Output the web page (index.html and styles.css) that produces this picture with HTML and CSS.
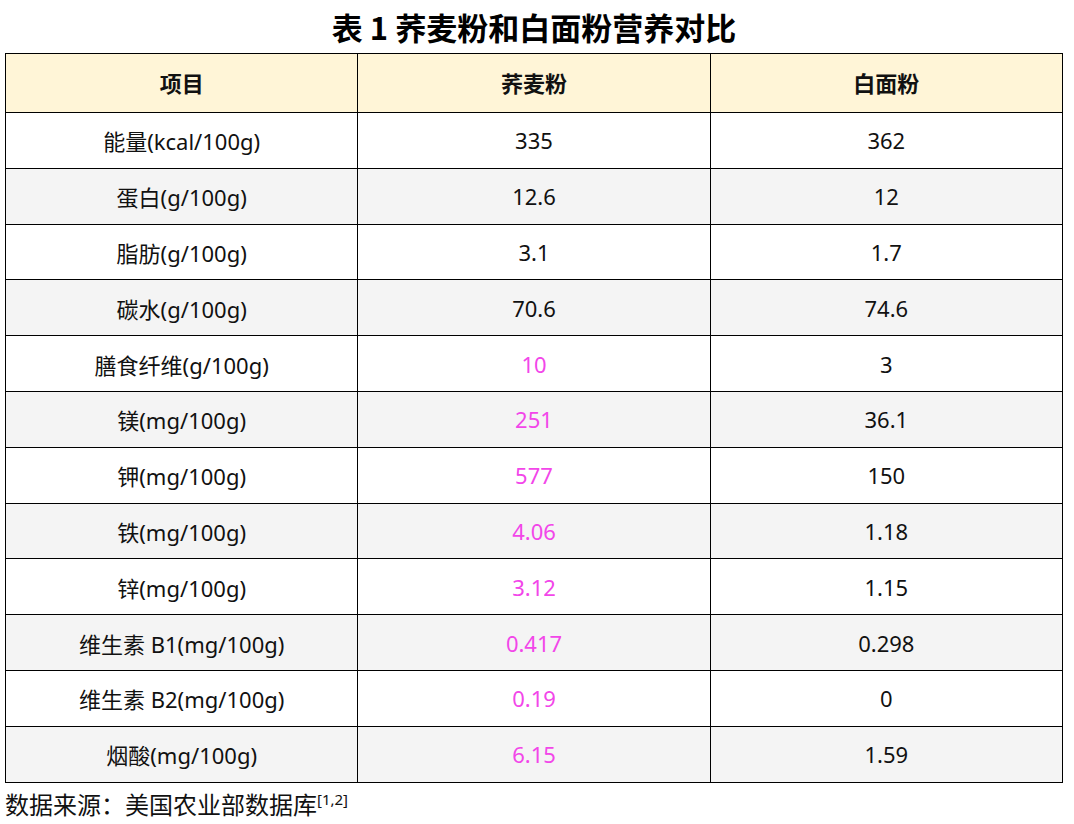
FILE: index.html
```html
<!DOCTYPE html>
<html lang="zh-CN">
<head>
<meta charset="utf-8">
<link rel="stylesheet" href="styles.css">
</head>
<body>
<div class="page">
  <h1 class="title">表 1 荞麦粉和白面粉营养对比</h1>
  <table class="cmp">
    <thead>
      <tr><th>项目</th><th>荞麦粉</th><th>白面粉</th></tr>
    </thead>
    <tbody>
      <tr><td>能量(kcal/100g)</td><td>335</td><td>362</td></tr>
      <tr><td>蛋白(g/100g)</td><td>12.6</td><td>12</td></tr>
      <tr><td>脂肪(g/100g)</td><td>3.1</td><td>1.7</td></tr>
      <tr><td>碳水(g/100g)</td><td>70.6</td><td>74.6</td></tr>
      <tr><td>膳食纤维(g/100g)</td><td class="hi">10</td><td>3</td></tr>
      <tr><td>镁(mg/100g)</td><td class="hi">251</td><td>36.1</td></tr>
      <tr><td>钾(mg/100g)</td><td class="hi">577</td><td>150</td></tr>
      <tr><td>铁(mg/100g)</td><td class="hi">4.06</td><td>1.18</td></tr>
      <tr><td>锌(mg/100g)</td><td class="hi">3.12</td><td>1.15</td></tr>
      <tr><td>维生素 B1(mg/100g)</td><td class="hi">0.417</td><td>0.298</td></tr>
      <tr><td>维生素 B2(mg/100g)</td><td class="hi">0.19</td><td>0</td></tr>
      <tr><td>烟酸(mg/100g)</td><td class="hi">6.15</td><td>1.59</td></tr>
    </tbody>
  </table>
  <p class="source">数据来源：美国农业部数据库<sup>[1,2]</sup></p>
</div>
</body>
</html>
```
FILE: styles.css
```css
html, body {
  margin: 0;
  padding: 0;
  background: #ffffff;
}
.page {
  padding: 0 11px 0 5px;
  font-family: "Noto Sans", "Noto Sans CJK SC", sans-serif;
  color: #111111;
}
.title {
  margin: 0;
  height: 53px;
  line-height: 54px;
  font-size: 31px;
  font-weight: 700;
  text-align: center;
  font-family: "Noto Sans CJK SC", sans-serif;
  color: #000000;
}
.cmp {
  width: 1058px;
  border-collapse: collapse;
  table-layout: fixed;
  font-size: 22px;
}
.cmp th, .cmp td {
  border: 1.5px solid #000000;
  text-align: center;
  padding: 0;
}
.cmp th {
  background: #fff5d7;
  height: 55px;
  padding-bottom: 3px;
  font-weight: 700;
  font-family: "Noto Sans CJK SC", sans-serif;
}
.cmp td {
  height: 54.8px;
}
.cmp tbody tr:nth-child(even) td {
  background: #f4f4f4;
}
.cmp td.hi {
  color: #f246e9;
}
.source {
  margin: 8px 0 0 0;
  font-size: 24px;
  line-height: 28px;
}
.source sup {
  font-size: 15px;
  vertical-align: 9px;
  line-height: 0;
}
```
